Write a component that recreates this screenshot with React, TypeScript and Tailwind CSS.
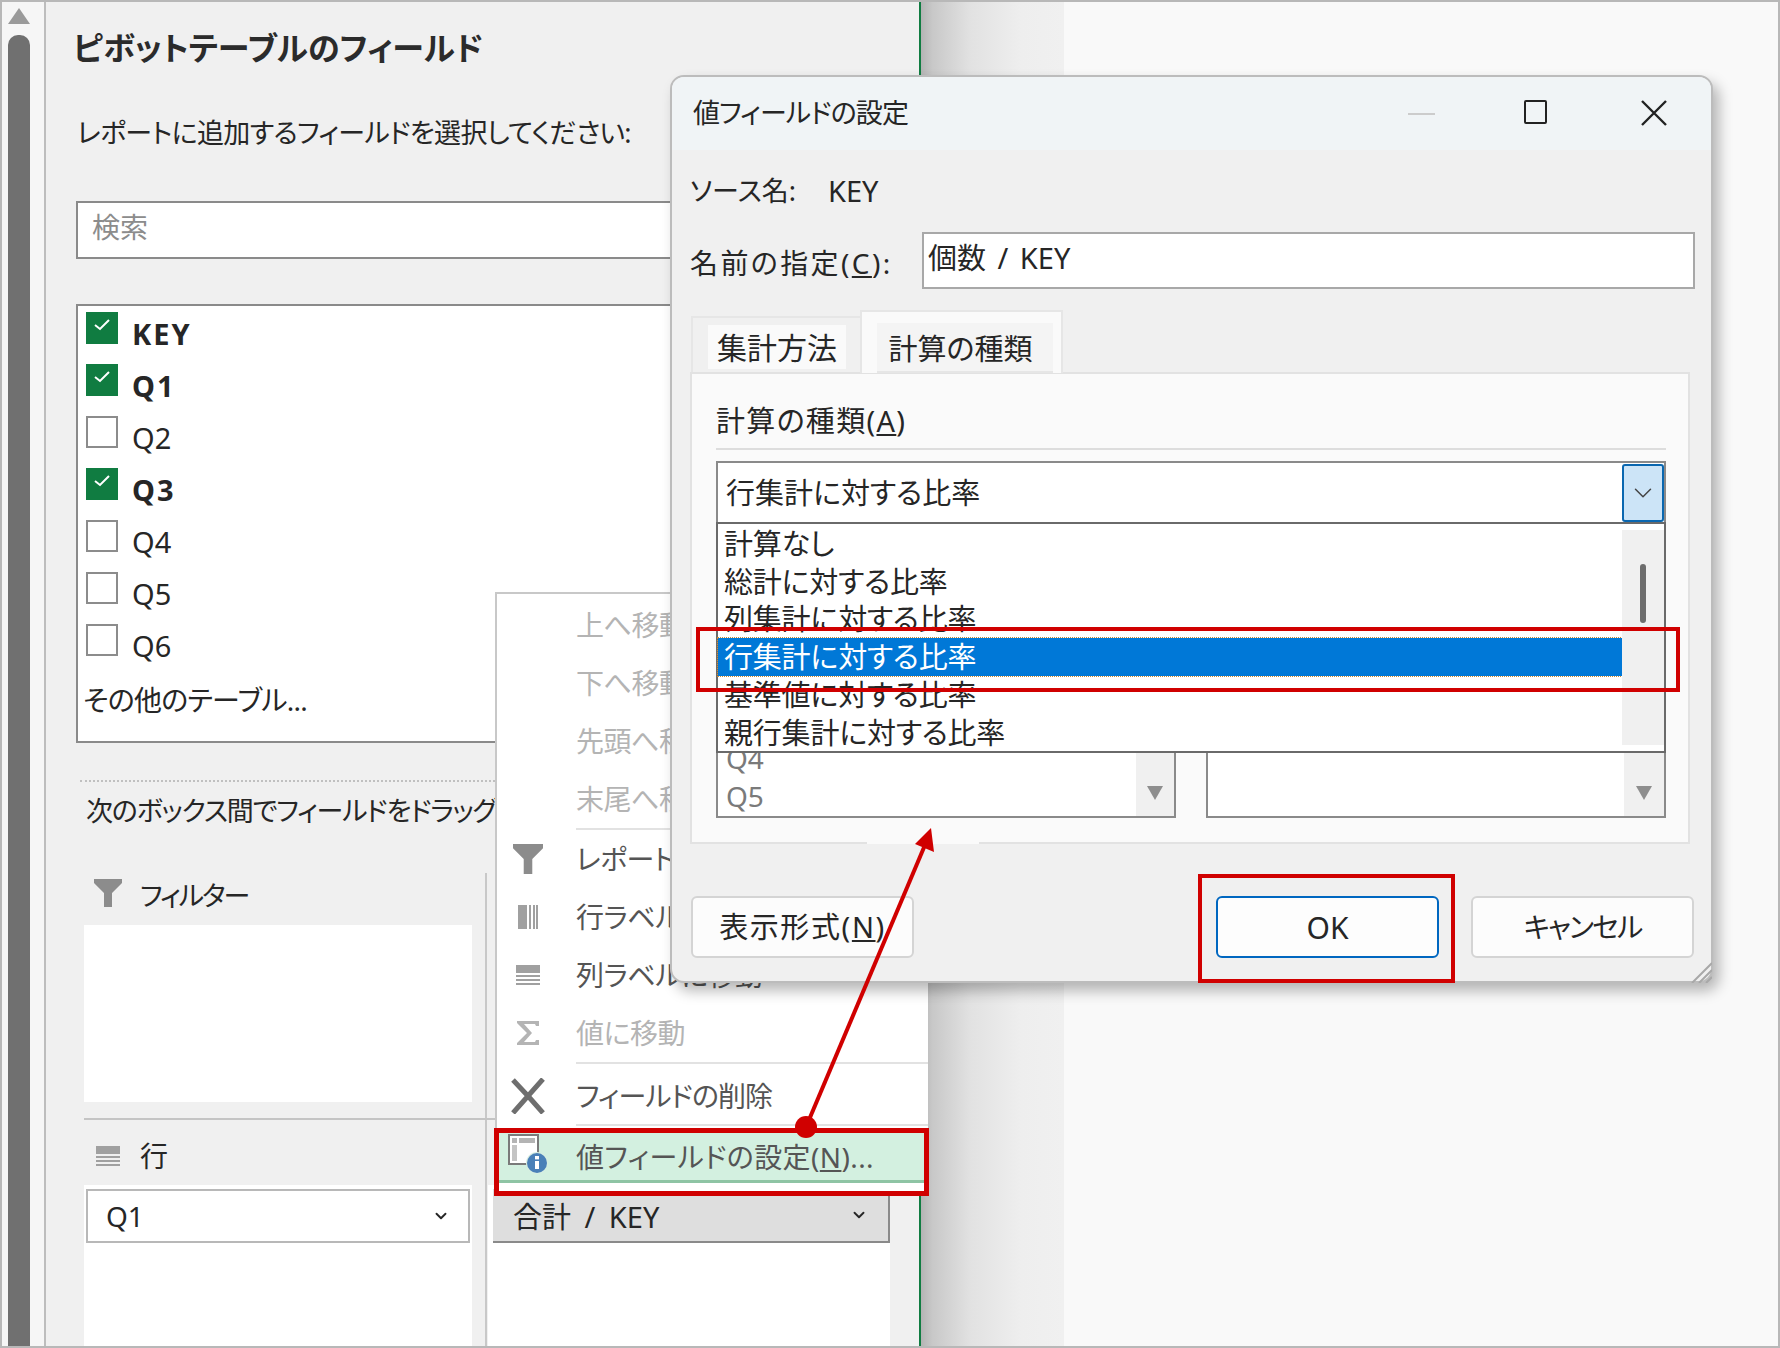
import { ReactNode } from "react";
import { ChevronDown } from "lucide-react";

const FIELDS = [
  { name: "KEY", on: true },
  { name: "Q1", on: true },
  { name: "Q2", on: false },
  { name: "Q3", on: true },
  { name: "Q4", on: false },
  { name: "Q5", on: false },
  { name: "Q6", on: false },
];

const CALC_ROWS = [
  { label: "計算なし", h: "h-[38px]" },
  { label: "総計に対する比率", h: "h-[37px]" },
  { label: "列集計に対する比率", h: "h-[38px]" },
  { label: "行集計に対する比率", h: "h-[38px]", selected: true },
  { label: "基準値に対する比率", h: "h-[38px]" },
  { label: "親行集計に対する比率", h: "h-[37px]" },
];

function Funnel({ className }: { className: string }) {
  return (
    <svg viewBox="0 0 28 28" className={className}>
      <path d="M0 0h28v4L18 14v14h-8V14L0 4z" fill="#8c8c8c" />
    </svg>
  );
}

function HLines({ className }: { className: string }) {
  return (
    <svg viewBox="0 0 24 20" className={className}>
      <rect width="24" height="8" fill="#a0a0a0" />
      <rect y="10" width="24" height="2" fill="#a0a0a0" />
      <rect y="14" width="24" height="2" fill="#a0a0a0" />
      <rect y="18" width="24" height="2" fill="#a0a0a0" />
    </svg>
  );
}

function VLines({ className }: { className: string }) {
  return (
    <svg viewBox="0 0 20 24" className={className}>
      <rect width="9" height="24" fill="#a0a0a0" />
      <rect x="11" width="2" height="24" fill="#a0a0a0" />
      <rect x="15" width="2" height="24" fill="#a0a0a0" />
      <rect x="18" width="2" height="24" fill="#a0a0a0" />
    </svg>
  );
}

function Sigma({ className }: { className: string }) {
  return (
    <svg viewBox="0 0 24 26" className={className}>
      <path d="M1 1h22v5h-3l-1-2H8l8 9-8 9h11l1-2h3v5H1v-2l10-10L1 3z" fill="#b4b4b4" />
    </svg>
  );
}

function BigX({ className }: { className: string }) {
  return (
    <svg viewBox="0 0 36 36" className={className}>
      <path d="M3 2l15 16M33 1L3 35M18 18l15 17" stroke="#6e6e6e" strokeWidth="5" fill="none" />
    </svg>
  );
}

function ValueIcon({ className }: { className: string }) {
  return (
    <svg viewBox="0 0 40 40" className={className}>
      <rect x="1" y="1" width="29" height="29" fill="#fff" stroke="#7a7a7a" strokeWidth="2" />
      <rect x="4" y="4" width="5" height="5" fill="#b4b4b4" />
      <rect x="11" y="4" width="16" height="5" fill="#b4b4b4" />
      <rect x="4" y="11" width="5" height="16" fill="#c4c4c4" />
      <circle cx="29" cy="29" r="11" fill="#d8eee2" />
      <circle cx="29" cy="29" r="10" fill="#4a80b8" />
      <rect x="27" y="27" width="4" height="8" fill="#fff" />
      <rect x="27" y="22" width="4" height="3.4" fill="#fff" />
    </svg>
  );
}

function DownTri({ className }: { className: string }) {
  return (
    <svg viewBox="0 0 16 14" className={className}>
      <path d="M0 0h16L8 14z" fill="#8e8e8e" />
    </svg>
  );
}

function MenuRow({ icon, label, disabled }: { icon?: ReactNode; label: string; disabled?: boolean }) {
  return (
    <div className="flex h-[58px] items-center">
      <div className="flex w-[79px] shrink-0 justify-center pr-[18px]">{icon}</div>
      <span className={"whitespace-nowrap text-[28px] tracking-[-0.5px] " + (disabled ? "text-[#b4b4b4]" : "text-[#555555]")}>{label}</span>
    </div>
  );
}

function MenuSep() {
  return <div className="ml-[79px] h-[2px] bg-[#e2e2e2]" />;
}

export default function App() {
  return (
    <div className="relative flex h-[1348px] w-[1780px] overflow-hidden bg-[#f9f9f9] font-['Noto_Sans','Noto_Sans_CJK_JP',sans-serif] text-[#262626] [font-feature-settings:'palt']">
      {/* sheet scrollbar */}
      <div className="flex w-[46px] shrink-0 flex-col border-r-2 border-[#bdbdbd] bg-[#f6f6f6] pl-[8px] pt-[8px]">
        <svg viewBox="0 0 22 16" className="h-[16px] w-[22px]">
          <path d="M11 0l11 16H0z" fill="#9a9a9a" />
        </svg>
        <div className="mt-[11px] w-[22px] flex-1 rounded-t-[10px] bg-[#707070]" />
      </div>

      {/* pivot field pane */}
      <div className="w-[875px] shrink-0 border-r-2 border-[#107c41] bg-[#f0f0f0] pl-[30px]">
        <div className="-ml-[3px] mt-[28px] h-[40px] text-[32px] font-bold leading-[40px] text-[#2b2b2b]">ピボットテーブルのフィールド</div>
        <div className="ml-[1px] mt-[45px] h-[40px] text-[27px] leading-[40px] tracking-[-0.65px]">レポートに追加するフィールドを選択してください:</div>
        <div className="mt-[48px] flex h-[58px] w-[824px] items-center border-2 border-[#8a8a8a] bg-white pb-[6px] pl-[14px] text-[28px] text-[#8c8c8c]">検索</div>
        <div className="mt-[45px] h-[439px] w-[824px] border-2 border-[#8a8a8a] bg-white pl-[8px] pt-[6px]">
          {FIELDS.map((f) => (
            <div key={f.name} className="flex h-[52px]">
              {f.on ? (
                <div className="flex h-[32px] w-[32px] items-center justify-center bg-[#107c41] pb-[6px]">
                  <svg viewBox="0 0 16 12" className="h-[12px] w-[16px]">
                    <path d="M1 6l5 4 9-9" stroke="#fff" strokeWidth="2" fill="none" />
                  </svg>
                </div>
              ) : (
                <div className="h-[32px] w-[32px] border-2 border-[#8c8c8c] bg-white" />
              )}
              <span className={"ml-[14px] mt-[4px] h-[36px] text-[29px] leading-[36px] " + (f.on ? "font-bold tracking-[2px]" : "font-normal")}>{f.name}</span>
            </div>
          ))}
          <div className="-ml-[3px] h-[48px] text-[28px] leading-[48px] tracking-[-0.7px]">その他のテーブル...</div>
        </div>
        <div className="ml-[4px] mt-[37px] w-[415px] border-t-2 border-dotted border-[#c0c0c0]" />
        <div className="ml-[10px] mt-[11px] h-[36px] w-[800px] whitespace-nowrap text-[27px] leading-[36px] tracking-[-1.2px]">次のボックス間でフィールドをドラッグしてください:</div>

        <div className="mt-[44px] flex h-[474px]">
          <div className="ml-[8px] flex w-[403px] flex-col border-r-2 border-[#c8c8c8]">
            <div className="flex h-[52px] shrink-0 pb-[4px] pl-[10px]">
              <Funnel className="mt-[6px] h-[28px] w-[28px]" />
              <span className="ml-[18px] mt-[4px] text-[27px] leading-[38px] tracking-[-2px]">フィルター</span>
            </div>
            <div className="h-[177px] w-[388px] shrink-0 bg-white" />
            <div className="mt-[16px] h-[2px] w-[411px] shrink-0 bg-[#c4c4c4]" />
            <div className="flex h-[65px] shrink-0 items-center pl-[12px] pt-[6px]">
              <HLines className="h-[20px] w-[24px]" />
              <span className="ml-[20px] text-[28px]">行</span>
            </div>
            <div className="w-[388px] flex-1 bg-white px-[2px] pt-[4px]">
              <div className="flex h-[54px] items-center justify-between border-2 border-[#b8b8b8] pl-[18px] pr-[18px] text-[28px]">
                <span>Q1</span>
                <ChevronDown className="h-[18px] w-[18px]" strokeWidth={2.5} />
              </div>
            </div>
          </div>
          <div className="flex flex-1 flex-col pl-[1px]">
            <div className="h-[312px] shrink-0" />
            <div className="w-[402px] flex-1 bg-white pl-[5px] pt-[4px]">
              <div className="flex h-[54px] items-center justify-between border-b-2 border-r-2 border-[#8a8a8a] bg-[#dedede] pl-[20px] pr-[20px] text-[29px]">
                <span className="pt-[3px] [word-spacing:6px]">合計 / KEY</span>
                <ChevronDown className="h-[18px] w-[18px]" strokeWidth={2.5} />
              </div>
            </div>
          </div>
        </div>
      </div>

      {/* dialog shadow falling on the sheet */}
      <div className="w-[143px] shrink-0 bg-[linear-gradient(to_right,#b4b4b4_0%,#c8c8c8_8%,#e2e2e2_35%,#eeeeee_70%,#f0f0f0_100%)]" />

      {/* context menu */}
      <div className="absolute left-[495px] top-[592px] h-[600px] w-[433px] border-l-2 border-t-2 border-[#c8c8c8] bg-white pt-[2px]">
        <MenuRow label="上へ移動" disabled />
        <MenuRow label="下へ移動" disabled />
        <MenuRow label="先頭へ移動" disabled />
        <MenuRow label="末尾へ移動" disabled />
        <MenuSep />
        <MenuRow label="レポート フィルターに移動" icon={<Funnel className="h-[30px] w-[30px]" />} />
        <MenuRow label="行ラベルに移動" icon={<VLines className="h-[24px] w-[20px]" />} />
        <MenuRow label="列ラベルに移動" icon={<HLines className="h-[20px] w-[24px]" />} />
        <MenuRow label="値に移動" disabled icon={<Sigma className="h-[26px] w-[24px]" />} />
        <MenuSep />
        <div className="flex h-[60px] items-center pt-[4px]">
          <div className="flex w-[79px] shrink-0 justify-center pr-[18px]">
            <BigX className="h-[36px] w-[36px]" />
          </div>
          <span className="whitespace-nowrap text-[28px] tracking-[-0.9px] text-[#555555]">フィールドの削除</span>
        </div>
        <MenuSep />
        <div className="mt-[2px] flex h-[55px] items-center border-b-[3px] border-[#8ec4a4] bg-[#d3f0e0]">
          <div className="flex w-[79px] shrink-0 justify-center pr-[18px]">
            <ValueIcon className="h-[40px] w-[40px]" />
          </div>
          <span className="whitespace-nowrap pt-[6px] text-[28px] tracking-[0.4px] text-[#555555]">
            値フィールドの設定(<span className="underline">N</span>)...
          </span>
        </div>
      </div>

      {/* value field settings dialog */}
      <div className="absolute left-[670px] top-[75px] flex h-[908px] w-[1043px] flex-col overflow-hidden rounded-[14px] border-2 border-[#bcbcbc] bg-[#f0f0f0] shadow-[6px_8px_14px_rgba(0,0,0,0.28)]">
        <div className="flex h-[73px] shrink-0 items-center bg-[#f0f4f6] pl-[21px] pr-[44px]">
          <span className="flex-1 text-[27px] tracking-[-0.9px]">値フィールドの設定</span>
          <div className="h-[2px] w-[27px] bg-[#cccccc]" />
          <div className="-mt-[4px] ml-[89px] h-[24px] w-[23px] rounded-[2px] border-2 border-[#222222]" />
          <svg viewBox="0 0 26 26" className="-mt-[1px] ml-[94px] h-[26px] w-[26px]">
            <path d="M1 1l24 24M25 1L1 25" stroke="#222222" strokeWidth="2.4" />
          </svg>
        </div>
        <div className="pl-[18px] pr-[16px]">
          <div className="mt-[23px] flex h-[36px] items-center text-[27px]">
            <span className="w-[138px] shrink-0">ソース名:</span>
            <span className="text-[29px]">KEY</span>
          </div>
          <div className="mt-[23px] flex h-[57px] items-center text-[27px]">
            <span className="w-[232px] shrink-0 pt-[4px] text-[28px] tracking-[2.4px]">
              名前の指定(<span className="underline">C</span>):
            </span>
            <div className="flex h-[57px] w-[776px] items-center border-2 border-[#a8a8a8] bg-white pb-[6px] pl-[4px] text-[29px] [word-spacing:4px]">個数 / KEY</div>
          </div>

          <div className="mt-[21px] flex h-[62px] items-end pl-[1px]">
            <div className="h-[56px] w-[169px] border-l-2 border-t-2 border-[#e6e6e6] pl-[15px] pt-[7px]">
              <div className="flex h-[44px] w-[138px] items-center justify-center bg-[#fafafa] text-[30px]">集計方法</div>
            </div>
            <div className="relative z-10 -mb-[1px] h-[63px] w-[203px] border-x-2 border-t-2 border-[#e6e6e6] bg-[#fafafa] pl-[15px] pt-[11px]">
              <div className="flex h-[50px] w-[176px] items-center justify-center border-b-2 border-[#e6e6e6] bg-[#f4f4f4] pr-[9px] pt-[3px] text-[29px]">計算の種類</div>
            </div>
          </div>

          <div className="h-[472px] w-[1000px] border-2 border-[#e2e2e2] bg-[#fafafa] pl-[24px] pr-[22px]">
            <div className="mt-[29px] h-[36px] text-[29px] leading-[36px] tracking-[1.3px]">
              計算の種類(<span className="underline">A</span>)
            </div>
            <div className="mt-[9px] h-[2px] bg-[#dddddd]" />
            <div className="mt-[11px] flex h-[61px] items-center justify-between border-x-2 border-t-2 border-[#8a8a8a] bg-white pl-[8px] text-[29px]">
              <span>行集計に対する比率</span>
              <div className="flex h-[58px] w-[42px] items-center justify-center rounded-[3px] border-2 border-[#0a67b0] bg-[#cce4f7]">
                <ChevronDown className="h-[30px] w-[30px] text-[#444444]" strokeWidth={1.2} />
              </div>
            </div>
            <div className="relative z-10 flex h-[231px] border-2 border-[#6a6a6a] bg-white">
              <div className="flex-1 pt-[1px]">
                {CALC_ROWS.map((r) => (
                  <div
                    key={r.label}
                    className={
                      "flex items-center whitespace-nowrap pl-[6px] text-[29px] tracking-[-0.2px] " +
                      r.h +
                      (r.selected ? " bg-[#0078d7] text-white outline-1 outline-dotted outline-[#d08a30]" : "")
                    }
                  >
                    {r.label}
                  </div>
                ))}
              </div>
              <div className="my-[6px] flex w-[42px] justify-center bg-[#f0f0f0]">
                <div className="mt-[34px] h-[59px] w-[6px] rounded-[3px] bg-[#6d6d6d]" />
              </div>
            </div>
            <div className="flex gap-[30px]">
              <div className="flex h-[65px] w-[460px] overflow-hidden border-x-2 border-b-2 border-[#8a8a8a] bg-white">
                <div className="-mt-[14px] flex-1 pl-[8px] text-[28px] leading-[38px] text-[#7a7a7a]">
                  <div>Q4</div>
                  <div>Q5</div>
                </div>
                <div className="flex w-[38px] items-end justify-center bg-[#f0f0f0] pb-[16px]">
                  <DownTri className="h-[14px] w-[16px]" />
                </div>
              </div>
              <div className="flex h-[65px] w-[461px] justify-end overflow-hidden border-x-2 border-b-2 border-[#8a8a8a] bg-white">
                <div className="flex w-[40px] items-end justify-center bg-[#f0f0f0] pb-[16px]">
                  <DownTri className="h-[14px] w-[16px]" />
                </div>
              </div>
            </div>
          </div>

          <div className="mt-[52px] flex h-[62px] pl-[1px] text-[28px]">
            <div className="flex w-[223px] items-center justify-center rounded-[6px] border-2 border-[#d4d4d4] bg-[#fcfcfc] text-[29px] tracking-[1.6px]">
              表示形式(<span className="underline">N</span>)
            </div>
            <div className="ml-[302px] flex w-[223px] items-center justify-center rounded-[6px] border-2 border-[#0067c0] bg-[#fdfdfd] text-[30px]">OK</div>
            <div className="ml-[32px] flex w-[223px] items-center justify-center rounded-[6px] border-2 border-[#d4d4d4] bg-[#fcfcfc] tracking-[-1.8px]">キャンセル</div>
          </div>
        </div>
      </div>

      {/* resize grip */}
      <svg viewBox="0 0 22 22" className="absolute left-[1690px] top-[961px] h-[22px] w-[22px]">
        <path d="M2 22L22 2M9 22L22 9M16 22l6-6" stroke="#a8a8a8" strokeWidth="2" />
      </svg>

      {/* notch in the tab panel's lower edge */}
      <div className="absolute left-[867px] top-[840px] h-[4px] w-[112px] bg-[#fafafa]" />

      {/* red annotations */}
      <div className="absolute left-[696px] top-[627px] z-20 h-[65px] w-[984px] border-[4px] border-[#d00000]" />
      <div className="absolute left-[1198px] top-[874px] z-20 h-[109px] w-[257px] border-[4px] border-[#d00000]" />
      <div className="absolute left-[494px] top-[1128px] z-20 h-[68px] w-[435px] border-[5px] border-[#d00000]" />
      <svg viewBox="0 0 1780 1348" className="pointer-events-none absolute left-0 top-0 z-20 h-[1348px] w-[1780px]">
        <line x1="806" y1="1127" x2="925" y2="845" stroke="#d00000" strokeWidth="4" />
        <path d="M931 828l3 24-19-8z" fill="#d00000" />
        <circle cx="806" cy="1127" r="11" fill="#d00000" />
      </svg>

      {/* picture frame */}
      <div className="pointer-events-none absolute inset-0 z-20 border-2 border-[#b8b8b8]" />
    </div>
  );
}
